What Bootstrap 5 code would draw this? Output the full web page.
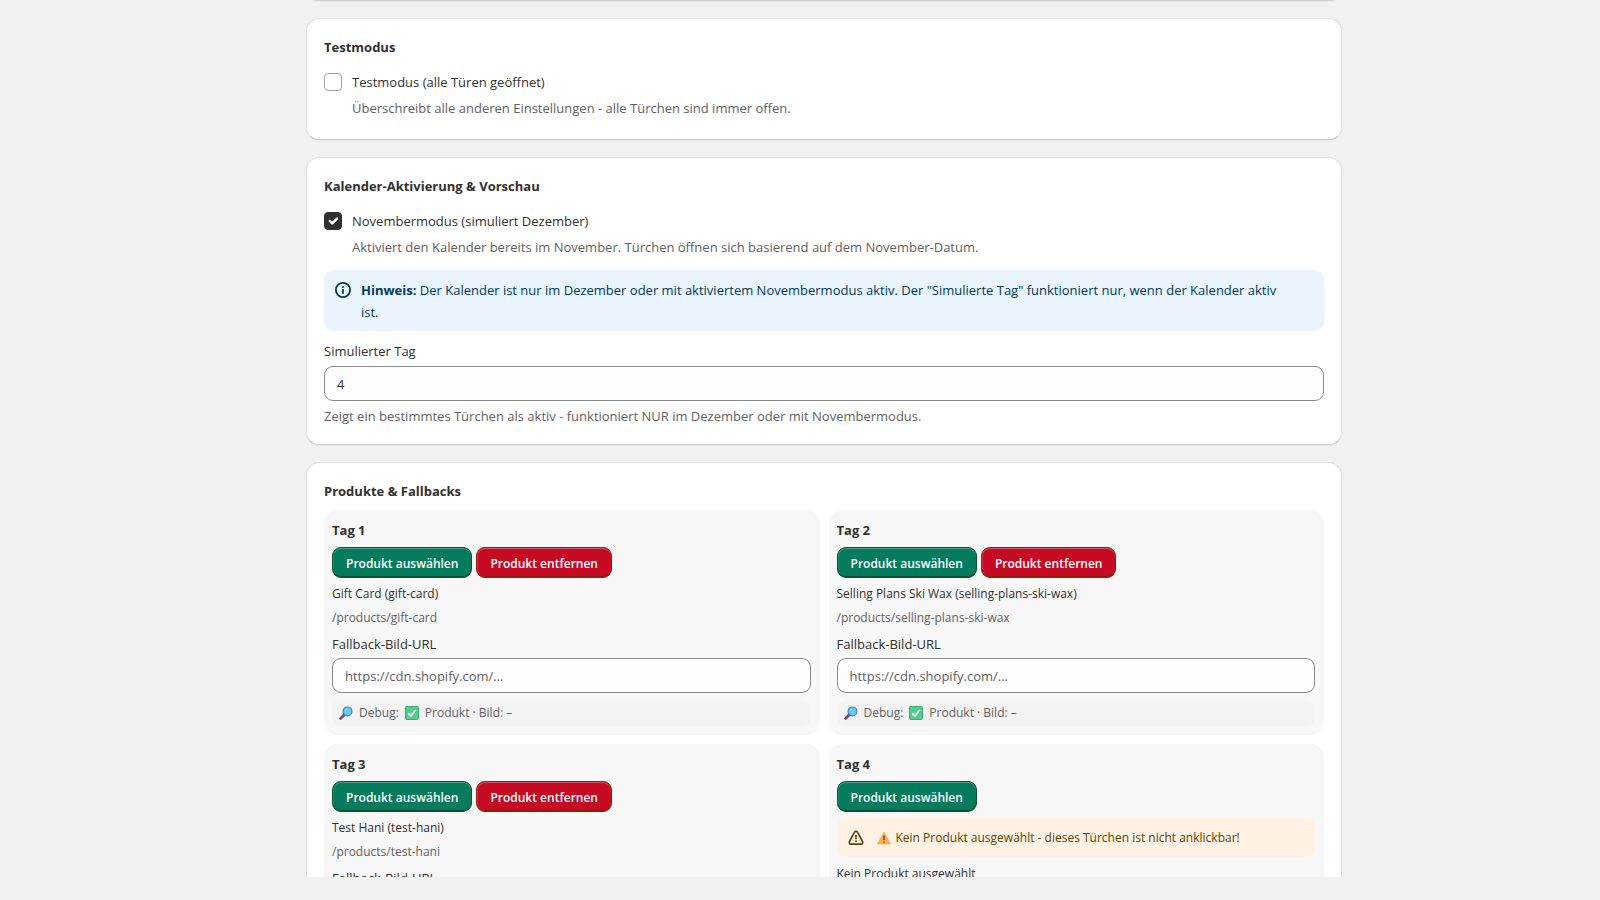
<!DOCTYPE html>
<html lang="de">
<head>
<meta charset="utf-8">
<meta name="viewport" content="width=device-width, initial-scale=1">
<title>Adventskalender – Einstellungen</title>
<link href="https://cdn.jsdelivr.net/npm/bootstrap@5.3.0/dist/css/bootstrap.min.css" rel="stylesheet">
<style>
  body { background: #f1f1f1; color: #303030; font: 13px/22px "Open Sans", "Noto Sans", sans-serif; }
  main { padding-left: 48px; }
  .page-end { height: 23px; }
  .settings { max-width: 1036px; }
  .panel { border: 1px solid #e0e0e0; border-bottom-color: #ccc; border-radius: 13px; background: #fff; padding: 17px; margin-bottom: 17px; box-shadow: 0 1px 1px rgba(0,0,0,.06); }
  .panel-previous { margin-top: -35px; }
  .panel h2 { font-size: 13px; line-height: 22px; font-weight: 700; margin: 0 0 9px; }
  .panel .products-title { margin-bottom: 8px; }
  .choice { display: flex; align-items: center; gap: 10px; height: 30px; }
  .choice .form-check-input { width: 18px; height: 18px; margin: 0; border: 1px solid #a0a0a0; border-radius: 4px; }
  .choice .form-check-input:checked { background-color: #303030; border-color: #303030; }
  .choice-help { padding: 0 0 3px 28px; }
  .subdued { color: #616161; }
  .note { display: flex; gap: 9px; margin: 9px 0; padding: 9px 28px 8px 10px; border-radius: 9px; background: #eaf4ff; color: #003a5a; }
  .note svg { flex: none; margin-top: 2px; }
  .field-label { display: block; margin-bottom: 4px; }
  .panel .form-control { height: 35px; padding: 0 12px; border: 1px solid #8a8a8a; border-radius: 9px; background: #fdfdfd; color: #303030; font-size: 13px; }
  .panel .form-control::placeholder { color: #616161; }
  .day-grid { --bs-gutter-x: 9px; --bs-gutter-y: 9px; }
  .day { background: #f7f7f7; border-radius: 13px; padding: 9px 9px 9px 8px; font-size: 12px; }
  .day h3 { font-size: 13px; line-height: 22px; font-weight: 700; margin: 0 0 6px; }
  .btn-day { height: 31px; padding: 5px 13px 3px; border-radius: 9px; color: #fff; font-size: 12px; font-weight: 600; line-height: 20px; }
  .btn-pick, .btn-pick:hover { color: #fff; background: #047b5d; border: 1px solid #0c5132; box-shadow: inset 0 -1px 0 #0c5132, inset 0 1px 0 #4d9f89, inset 1px 0 0 #218a6e; }
  .btn-drop, .btn-drop:hover { color: #fff; background: #c70a24; border: 1px solid #8e1f0b; box-shadow: inset 0 -1px 0 #8e1f0b, inset 0 1px 0 #d8566a, inset 1px 0 0 #cf3048; }
  .product-name { line-height: 20px; margin-top: 6px; }
  .product-path { line-height: 20px; margin: 4px 0 6px; color: #616161; }
  .day .field-label { line-height: 20px; font-size: 13px; }
  .debug { display: flex; align-items: center; gap: 6px; margin-top: 7px; height: 26px; padding: 0 7px; border-radius: 9px; background: #f3f3f3; color: #616161; }
  .warn { display: flex; align-items: center; height: 39px; margin: 6px 0 7px; padding: 0 11px; border-radius: 9px; background: #fff1e3; color: #5e4200; }
  .warn-icon { margin-right: 13px; }
  .warn-emoji { margin-right: 5px; }
</style>
</head>
<body>
<div class="vh-100 d-flex flex-column overflow-hidden">
<main class="flex-fill overflow-hidden">
<div class="settings mx-auto">
  <section class="panel panel-previous" aria-hidden="true"></section>

  <section class="panel">
    <h2>Testmodus</h2>
    <div class="choice">
      <input class="form-check-input" type="checkbox" id="testmode" aria-describedby="testmode-help">
      <label for="testmode">Testmodus (alle Türen geöffnet)</label>
    </div>
    <div class="choice-help subdued" id="testmode-help">Überschreibt alle anderen Einstellungen - alle Türchen sind immer offen.</div>
  </section>

  <section class="panel">
    <h2>Kalender-Aktivierung &amp; Vorschau</h2>
    <div class="choice">
      <input class="form-check-input" type="checkbox" id="november" checked aria-describedby="november-help">
      <label for="november">Novembermodus (simuliert Dezember)</label>
    </div>
    <div class="choice-help subdued" id="november-help">Aktiviert den Kalender bereits im November. Türchen öffnen sich basierend auf dem November-Datum.</div>
    <div class="note" role="note">
      <svg width="18" height="18" viewBox="0 0 18 18" fill="none" stroke="currentColor" stroke-width="1.8" stroke-linecap="round"><circle cx="9" cy="9" r="7.1"/><path d="M9 8.7v3.4"/><circle cx="9" cy="5.9" r="1" fill="currentColor" stroke="none"/></svg>
      <div><strong>Hinweis:</strong> Der Kalender ist nur im Dezember oder mit aktiviertem Novembermodus aktiv. Der "Simulierte Tag" funktioniert nur, wenn der Kalender aktiv ist.</div>
    </div>
    <label class="field-label" for="day-sim">Simulierter Tag</label>
    <input class="form-control" type="text" inputmode="numeric" id="day-sim" value="4" aria-describedby="day-sim-help">
    <div class="subdued mt-1" id="day-sim-help">Zeigt ein bestimmtes Türchen als aktiv - funktioniert NUR im Dezember oder mit Novembermodus.</div>
  </section>

  <section class="panel">
    <h2 class="products-title">Produkte &amp; Fallbacks</h2>
    <div class="row row-cols-2 day-grid">
      <div class="col">
        <article class="day">
          <h3>Tag 1</h3>
          <div class="d-flex gap-1">
            <button type="button" class="btn btn-day btn-pick">Produkt auswählen</button>
            <button type="button" class="btn btn-day btn-drop">Produkt entfernen</button>
          </div>
          <div class="product-name">Gift Card (gift-card)</div>
          <div class="product-path">/products/gift-card</div>
          <label class="field-label" for="url-1">Fallback-Bild-URL</label>
          <input class="form-control" type="text" id="url-1" placeholder="https://cdn.shopify.com/...">
          <div class="debug"><svg width="14" height="14"><use href="#i-lens"/></svg><span>Debug:</span><svg width="14" height="14"><use href="#i-ok"/></svg><span>Produkt · Bild: –</span></div>
        </article>
      </div>
      <div class="col">
        <article class="day">
          <h3>Tag 2</h3>
          <div class="d-flex gap-1">
            <button type="button" class="btn btn-day btn-pick">Produkt auswählen</button>
            <button type="button" class="btn btn-day btn-drop">Produkt entfernen</button>
          </div>
          <div class="product-name">Selling Plans Ski Wax (selling-plans-ski-wax)</div>
          <div class="product-path">/products/selling-plans-ski-wax</div>
          <label class="field-label" for="url-2">Fallback-Bild-URL</label>
          <input class="form-control" type="text" id="url-2" placeholder="https://cdn.shopify.com/...">
          <div class="debug"><svg width="14" height="14"><use href="#i-lens"/></svg><span>Debug:</span><svg width="14" height="14"><use href="#i-ok"/></svg><span>Produkt · Bild: –</span></div>
        </article>
      </div>
      <div class="col">
        <article class="day h-100">
          <h3>Tag 3</h3>
          <div class="d-flex gap-1">
            <button type="button" class="btn btn-day btn-pick">Produkt auswählen</button>
            <button type="button" class="btn btn-day btn-drop">Produkt entfernen</button>
          </div>
          <div class="product-name">Test Hani (test-hani)</div>
          <div class="product-path">/products/test-hani</div>
          <label class="field-label" for="url-3">Fallback-Bild-URL</label>
          <input class="form-control" type="text" id="url-3" placeholder="https://cdn.shopify.com/...">
        </article>
      </div>
      <div class="col">
        <article class="day h-100">
          <h3>Tag 4</h3>
          <div class="d-flex">
            <button type="button" class="btn btn-day btn-pick">Produkt auswählen</button>
          </div>
          <div class="warn" role="alert">
            <svg class="warn-icon" width="16" height="16" viewBox="0 0 16 16" fill="none" stroke="currentColor" stroke-width="1.6" stroke-linecap="round" stroke-linejoin="round"><path d="M6.5 2.1a1.7 1.7 0 0 1 3 0l5 9.4c.7 1.3 0 2.6-1.4 2.6H2.9c-1.4 0-2.1-1.3-1.4-2.6z"/><path d="M8 5.6v3.2"/><circle cx="8" cy="11.2" r=".9" fill="currentColor" stroke="none"/></svg>
            <svg class="warn-emoji" width="14" height="14" viewBox="0 0 14 14"><path d="M7 1.200 13.600 13H.4z" fill="#ffb04c" stroke="#f5a54a" stroke-width=".6" stroke-linejoin="round"/><path d="M7 4.500v4.700M7 10.400v1.400" stroke="#5b4a45" stroke-width="1.500"/></svg>
            <span>Kein Produkt ausgewählt - dieses Türchen ist nicht anklickbar!</span>
          </div>
          <div class="product-name">Kein Produkt ausgewählt</div>
        </article>
      </div>
    </div>
  </section>
</div>
</main>
<footer class="flex-shrink-0 page-end"></footer>
</div>

<svg class="d-none" aria-hidden="true">
  <symbol id="i-lens" viewBox="0 0 14 14"><path d="M1.600 12.400 5 9" stroke="#7c4587" stroke-width="2.800" stroke-linecap="round"/><circle cx="8.500" cy="5.400" r="4.400" fill="#62cdf2" stroke="#4b83b8" stroke-width="1.200"/><path d="M6.300 4.800a2.500 2.500 0 0 1 2-1.900" stroke="#a9e8fb" fill="none"/></symbol>
  <symbol id="i-ok" viewBox="0 0 14 14"><rect x=".5" y=".5" width="13" height="13" rx="1" fill="#4fd08a" stroke="#3fae74"/><path d="m3.300 7.400 2.500 2.600 5-6" fill="none" stroke="#fff" stroke-width="1.700"/></symbol>
</svg>
<script src="https://cdn.jsdelivr.net/npm/bootstrap@5.3.0/dist/js/bootstrap.bundle.min.js"></script>
</body>
</html>
